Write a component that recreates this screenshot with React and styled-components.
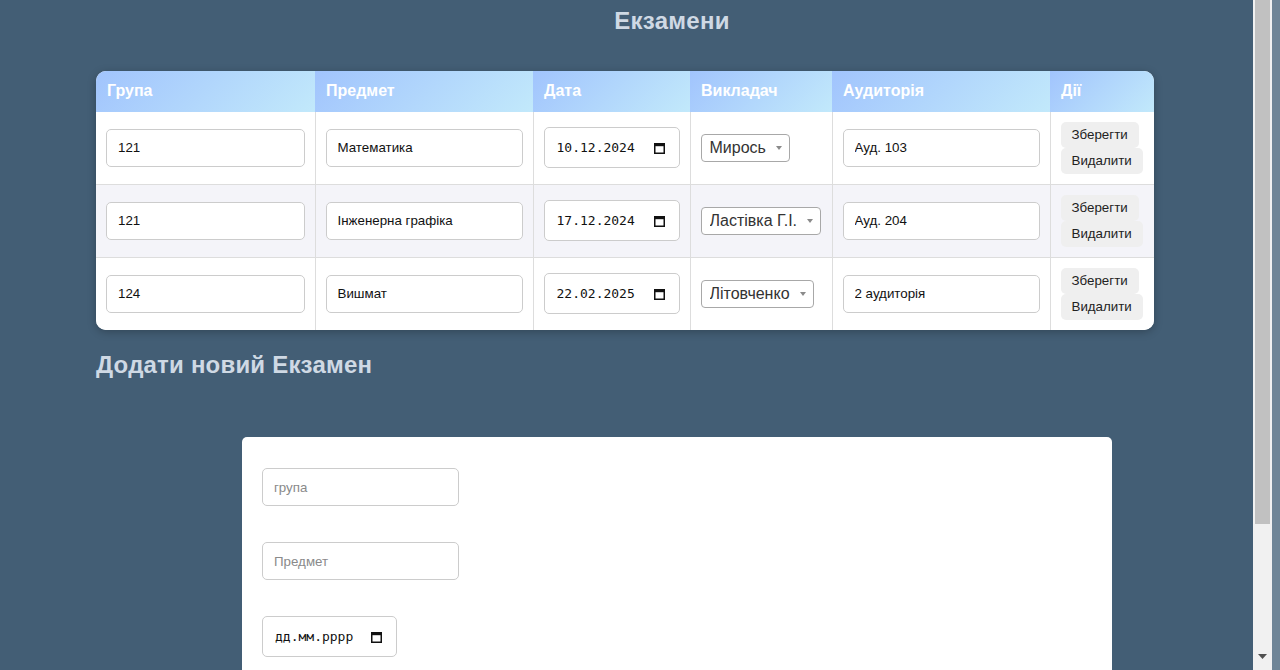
import React from 'react';
import styled, { createGlobalStyle } from 'styled-components';

const GlobalStyle = createGlobalStyle`
  html, body { margin: 0; padding: 0; height: 100%; overflow: hidden; }
  body { background: #6f8597; font-family: "Liberation Sans", Arial, sans-serif; }
  #root { height: 100%; }
  *, *::before, *::after { box-sizing: border-box; }
`;

const Shell = styled.div`
  display: flex;
  height: 100vh;
`;

const Viewport = styled.main`
  flex: none;
  width: 1253px;
  height: 100%;
  overflow: hidden;
  background: #435e75;
`;

const ScrollTrack = styled.div`
  flex: none;
  width: 19px;
  height: 100%;
  padding: 0 2px 11px;
  background: #f1f1f1;
  display: flex;
  flex-direction: column;
  justify-content: space-between;
  align-items: stretch;
`;

const ScrollThumb = styled.div`
  height: 524px;
  background: #c1c1c1;
`;

const ScrollArrow = styled.svg`
  display: block;
  align-self: center;
`;

const Page = styled.div`
  padding-top: 7px;
`;

const Title = styled.h1`
  margin: 0 0 36px;
  padding-left: 91px;
  text-align: center;
  font-size: 24px;
  line-height: 27.6px;
  font-weight: 700;
  letter-spacing: 0.3px;
  color: #cfd9e4;
`;

const SubTitle = styled.h2`
  margin: 21px 0 0 96px;
  font-size: 24px;
  line-height: 27.6px;
  font-weight: 700;
  letter-spacing: 0.2px;
  color: #cfd9e4;
`;

const TableWrap = styled.div`
  margin-left: 96px;
  width: 1058px;
  border-radius: 10px;
  overflow: hidden;
  background: #fff;
  box-shadow: 0 2px 8px rgba(0, 0, 0, 0.25);
`;

const Table = styled.table`
  width: 100%;
  border-collapse: collapse;
  table-layout: fixed;
`;

const Th = styled.th`
  height: 41px;
  padding: 0 11px;
  text-align: left;
  color: #fff;
  font-size: 16px;
  font-weight: 700;
  background: linear-gradient(135deg, #a1c4fd, #c2e9fb);
`;

const Tr = styled.tr`
  background: ${(p) => (p.$alt ? '#f4f4f9' : '#fff')};
  &:last-child td { border-bottom: none; }
`;

const Td = styled.td`
  padding: 10px;
  vertical-align: middle;
  border-bottom: 1px solid #ddd;
  border-right: 1px solid #ddd;
  &:last-child { border-right: none; }
`;

const TextInput = styled.input`
  display: block;
  width: ${(p) => p.$w || '100%'};
  height: 38px;
  padding: 0 11px;
  border: 1px solid #ccc;
  border-radius: 5px;
  background: #fff;
  font-family: "Liberation Sans", Arial, sans-serif;
  font-size: 13.33px;
  color: #111;
  outline: none;
  &::placeholder { color: #8a8a8a; }
`;

const DateBox = styled.label`
  display: flex;
  align-items: center;
  width: ${(p) => p.$w}px;
  height: 41px;
  padding: 0 14px 0 12px;
  border: 1px solid #ccc;
  border-radius: 5px;
  background: #fff;
`;

const DateInput = styled.input`
  flex: 1;
  min-width: 0;
  border: none;
  padding: 0;
  outline: none;
  background: transparent;
  font-family: "DejaVu Sans Mono", "Liberation Mono", monospace;
  font-size: 13px;
  color: #111;
`;

const SelectBox = styled.span`
  position: relative;
  display: inline-block;
  &::after {
    content: '';
    position: absolute;
    right: 8px;
    top: 12px;
    border-left: 3.5px solid transparent;
    border-right: 3.5px solid transparent;
    border-top: 4px solid #8a8a8a;
    pointer-events: none;
  }
`;

const Select = styled.select`
  appearance: none;
  -webkit-appearance: none;
  display: block;
  height: 28px;
  padding: 0 22px 0 8px;
  border: 1px solid #a8a8a8;
  border-radius: 4px;
  background: #fff;
  font-family: "Liberation Sans", Arial, sans-serif;
  font-size: 16px;
  color: #333;
  outline: none;
`;

const ButtonStack = styled.div`
  display: flex;
  flex-direction: column;
  align-items: flex-start;
`;

const Button = styled.button`
  display: block;
  margin: 0;
  padding: 5px 11px;
  border: none;
  border-radius: 5px;
  background: #efefef;
  font-family: "Liberation Sans", Arial, sans-serif;
  font-size: 13.33px;
  line-height: 16px;
  color: #222;
  cursor: pointer;
`;

const Card = styled.form`
  margin: 59px 0 0 242px;
  width: 870px;
  padding: 31px 20px 30px;
  background: #fff;
  border-radius: 5px;
  display: flex;
  flex-direction: column;
  align-items: flex-start;
  gap: 36px;
`;

const CalendarIcon = () => (
  <svg width="11" height="12" viewBox="0 0 11 12" aria-hidden="true">
    <rect x="0.75" y="1.75" width="9.5" height="9.5" fill="none" stroke="#111" strokeWidth="1.5" />
    <rect x="0" y="1" width="11" height="3.2" fill="#111" />
  </svg>
);

const DateField = ({ value, w }) => (
  <DateBox $w={w}>
    <DateInput type="text" defaultValue={value} />
    <CalendarIcon />
  </DateBox>
);

const rows = [
  { group: '121', subject: 'Математика', date: '10.12.2024', teacher: 'Мирось', room: 'Ауд. 103' },
  { group: '121', subject: 'Інженерна графіка', date: '17.12.2024', teacher: 'Ластівка Г.І.', room: 'Ауд. 204' },
  { group: '124', subject: 'Вишмат', date: '22.02.2025', teacher: 'Літовченко', room: '2 аудиторія' },
];

const cols = [219, 218, 157, 142, 218, 104];
const heads = ['Група', 'Предмет', 'Дата', 'Викладач', 'Аудиторія', 'Дії'];

export default function App() {
  return (
    <>
      <GlobalStyle />
      <Shell>
        <Viewport>
          <Page>
            <Title>Екзамени</Title>
            <TableWrap>
              <Table>
                <colgroup>
                  {cols.map((w, i) => (
                    <col key={i} style={{ width: w }} />
                  ))}
                </colgroup>
                <thead>
                  <tr>
                    {heads.map((h) => (
                      <Th key={h}>{h}</Th>
                    ))}
                  </tr>
                </thead>
                <tbody>
                  {rows.map((r, i) => (
                    <Tr key={i} $alt={i === 1}>
                      <Td><TextInput type="text" defaultValue={r.group} /></Td>
                      <Td><TextInput type="text" defaultValue={r.subject} /></Td>
                      <Td><DateField value={r.date} w={136} /></Td>
                      <Td>
                        <SelectBox>
                          <Select defaultValue={r.teacher}>
                            <option value={r.teacher}>{r.teacher}</option>
                          </Select>
                        </SelectBox>
                      </Td>
                      <Td><TextInput type="text" defaultValue={r.room} /></Td>
                      <Td>
                        <ButtonStack>
                          <Button type="button">Зберегти</Button>
                          <Button type="button">Видалити</Button>
                        </ButtonStack>
                      </Td>
                    </Tr>
                  ))}
                </tbody>
              </Table>
            </TableWrap>
            <SubTitle>Додати новий Екзамен</SubTitle>
            <Card onSubmit={(e) => e.preventDefault()}>
              <TextInput type="text" placeholder="група" $w="197px" />
              <TextInput type="text" placeholder="Предмет" $w="197px" />
              <DateField value="дд.мм.рррр" w={135} />
              <SelectBox>
                <Select defaultValue="">
                  <option value="">Викладач</option>
                </Select>
              </SelectBox>
              <Button type="submit">Додати</Button>
            </Card>
          </Page>
        </Viewport>
        <ScrollTrack aria-hidden="true">
          <ScrollThumb />
          <ScrollArrow width="9" height="5" viewBox="0 0 9 5">
            <path d="M0 0 H9 L4.5 5 Z" fill="#505050" />
          </ScrollArrow>
        </ScrollTrack>
      </Shell>
    </>
  );
}
